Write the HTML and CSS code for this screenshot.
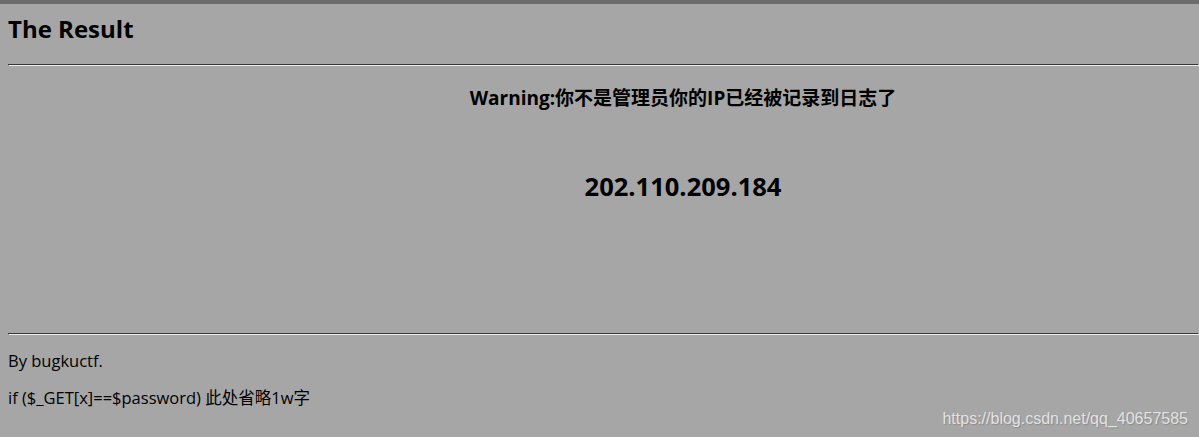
FILE: index.html
```html
<!DOCTYPE html>
<html lang="zh-CN">
 <head>
  <meta charset="utf-8">
  <title>The Result</title>
  <link rel="stylesheet" href="styles.css">
 </head>
 <body>
  <h2 class="title">The Result</h2>
  <hr>
  <div id="result">
   <h3 class="warn">Warning:你不是管理员你的IP已经被记录到日志了</h3>
   <h2 class="ip">202.110.209.184</h2>
  </div>
  <hr>
  <p class="note">By bugkuctf.</p>
  <p class="note">if ($_GET[x]==$password) 此处省略1w字</p>
  <span class="watermark">https://blog.csdn.net/qq_40657585</span>
 </body>
</html>
```

FILE: styles.css
```css
html {
    background: #a6a6a6;
    border-top: 4px solid #6c6c6c;
    overflow: hidden;
}

body {
    margin: 0 0 0 8px;
    font-family: "Open Sans", "Noto Sans CJK SC", sans-serif;
    color: #000;
}

.title {
    font-size: 24px;
    line-height: 32px;
    margin: 9px 0 0;
}

hr {
    margin: 19px 0 0;
    border: 1px inset;
    border-color: #8c8c8c #eeeeee #eeeeee #8c8c8c;
}

#result {
    text-align: center;
    padding: 19px 0 0 159px;
    height: 228px;
}

#result + hr {
    margin-top: 20px;
}

.warn {
    font-size: 19px;
    line-height: 26px;
    margin: 0;
}

.ip {
    font-size: 25.5px;
    line-height: 34px;
    margin: 58px 0 0;
}

.note {
    font-size: 16.5px;
    line-height: 22px;
    margin: 15px 0 0;
}

.watermark {
    position: absolute;
    right: 11px;
    bottom: 9px;
    font-family: "Liberation Sans", Arial, sans-serif;
    font-size: 16px;
    color: #e2e2e2;
    text-shadow: 1px 1px 1px #8a8a8a;
}
```
